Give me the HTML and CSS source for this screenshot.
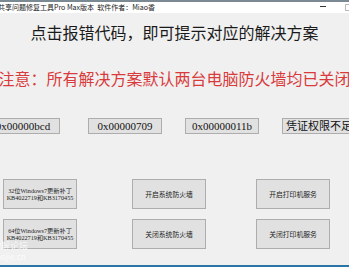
FILE: index.html
```html
<!DOCTYPE html>
<html lang="zh-CN">
<head>
<meta charset="utf-8">
<title>共享问题修复工具</title>
<link rel="stylesheet" href="styles.css">
</head>
<body>
<div class="app">
  <div class="titlebar">
    <span class="title">共享问题修复工具Pro Max版本&nbsp;&nbsp;软件作者：Miao香</span>
    <span class="ctl-min"></span>
    <span class="ctl-max"></span>
  </div>
  <div class="main">
    <div class="heading">点击报错代码，即可提示对应的解决方案</div>
    <div class="notice">注意：所有解决方案默认两台电脑防火墙均已关闭</div>
    <div class="row codes">
      <button class="btn code first">0x00000bcd</button>
      <button class="btn code">0x00000709</button>
      <button class="btn code">0x00000011b</button>
      <button class="btn code">凭证权限不足</button>
    </div>
    <div class="row actions">
      <button class="btn act first"><span class="two">32位Windows7更新补丁<br>KB4022719和KB3170455</span></button>
      <button class="btn act">开启系统防火墙</button>
      <button class="btn act">开启打印机服务</button>
    </div>
    <div class="row actions second">
      <button class="btn act first"><span class="two">64位Windows7更新补丁<br>KB4022719和KB3170455</span></button>
      <button class="btn act">关闭系统防火墙</button>
      <button class="btn act">关闭打印机服务</button>
    </div>
    <div class="watermark"><span class="wm1">吾爱破解论坛</span><span class="wm2">www.52pojie.cn</span></div>
    <div class="bottomline"></div>
  </div>
</div>
</body>
</html>
```
FILE: styles.css
```css
* { box-sizing: border-box; }
html, body { margin: 0; padding: 0; }
body {
  width: 349px;
  height: 267px;
  overflow: hidden;
  background: #f0f0f0;
  font-family: "Liberation Serif", "Noto Sans CJK SC", serif;
}
.app {
  width: 349px;
  height: 267px;
  display: flex;
  flex-direction: column;
  overflow: hidden;
}
.titlebar {
  height: 13px;
  border-top: 2px solid #7b8a92;
  background: #ffffff;
  display: flex;
  align-items: center;
  position: relative;
  flex: none;
}
.title {
  font-family: "Noto Sans CJK SC", sans-serif;
  font-size: 7px;
  line-height: 11px;
  color: #222;
  white-space: nowrap;
  margin-left: -2px;
}
.ctl-min {
  position: absolute;
  left: 320px;
  top: 4px;
  width: 6px;
  height: 1px;
  background: #333;
}
.ctl-max {
  position: absolute;
  left: 345px;
  top: 2px;
  width: 7px;
  height: 7px;
  border: 1px solid #bbb;
}
.main {
  flex: 1;
  display: flex;
  flex-direction: column;
  position: relative;
  background: #f0f0f0;
}
.heading {
  margin-top: 11px;
  height: 16px;
  line-height: 16px;
  font-size: 16px;
  font-family: "Noto Sans CJK SC", serif;
  color: #1a1a1a;
  text-align: center;
  white-space: nowrap;
}
.notice {
  margin-top: 30px;
  height: 16px;
  line-height: 16px;
  font-size: 16px;
  font-family: "Noto Sans CJK SC", serif;
  color: #d93a3c;
  display: flex;
  justify-content: center;
  white-space: nowrap;
}
.row {
  display: flex;
  flex: none;
}
.btn {
  margin: 0;
  padding: 0;
  background: #e1e1e1;
  border: 1px solid #adadad;
  border-radius: 0;
  color: #111;
  display: flex;
  align-items: center;
  justify-content: center;
  white-space: nowrap;
  overflow: hidden;
  flex: none;
}
.codes {
  margin-top: 32px;
  margin-left: -14px;
  gap: 23px;
  height: 16px;
}
.code {
  width: 74px;
  height: 16px;
  font-family: "Liberation Serif", "Noto Sans CJK SC", serif;
  font-size: 11px;
  line-height: 14px;
}
.code.first { margin-right: 5px; }
.actions {
  margin-top: 45px;
  margin-left: 3px;
  gap: 50px;
  height: 30px;
}
.actions.second { margin-top: 10px; }
.act {
  width: 74px;
  height: 30px;
  font-family: "Noto Sans CJK SC", sans-serif;
  font-size: 6.8px;
  color: #222;
}
.act.first { margin-right: 5px; }
.two {
  font-family: "Liberation Serif", "Noto Sans CJK SC", serif;
  font-size: 6.2px;
  line-height: 7px;
  text-align: center;
}
.watermark {
  position: absolute;
  left: -26px;
  top: 227px;
  display: flex;
  flex-direction: column;
  color: rgba(255, 255, 255, 0.85);
  font-family: "Noto Sans CJK SC", sans-serif;
  line-height: 11px;
  white-space: nowrap;
}
.wm1 { font-size: 9px; }
.wm2 { font-size: 8px; margin-left: -8px; }
.bottomline {
  margin-top: auto;
  height: 2px;
  background: #2b74a6;
  flex: none;
}
```
